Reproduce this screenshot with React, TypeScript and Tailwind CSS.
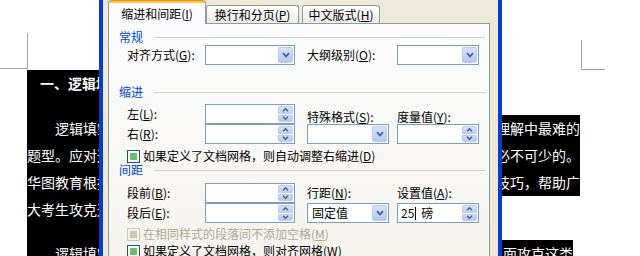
import type { ReactNode } from "react";

// access key letter, underlined like the XP dialogs do
function Key({ k }: { k: string }) {
  return (
    <>
      (<span className="underline">{k}</span>)
    </>
  );
}

function DropButton() {
  return (
    <span className="flex h-full w-[15px] items-center justify-center rounded-[2px] border border-[#B9CBF3] bg-linear-to-b from-[#D6E2FD] to-[#B3C7F3]">
      <svg width="8" height="6" viewBox="0 0 8 6">
        <path d="M1 1.2 L4 4.4 L7 1.2" stroke="#4D6185" strokeWidth="1.8" fill="none" />
      </svg>
    </span>
  );
}

function SpinButtons() {
  return (
    <span className="flex h-full w-[15px] flex-col gap-px">
      <span className="flex flex-1 items-center justify-center rounded-t-[2px] border border-[#B9CBF3] bg-linear-to-b from-[#D6E2FD] to-[#BFD0F6]">
        <svg width="7" height="4" viewBox="0 0 7 4">
          <path d="M1 3.2 L3.5 0.8 L6 3.2" stroke="#4D6185" strokeWidth="1.5" fill="none" />
        </svg>
      </span>
      <span className="flex flex-1 items-center justify-center rounded-b-[2px] border border-[#B9CBF3] bg-linear-to-b from-[#C9D8FB] to-[#B3C7F3]">
        <svg width="7" height="4" viewBox="0 0 7 4">
          <path d="M1 0.8 L3.5 3.2 L6 0.8" stroke="#4D6185" strokeWidth="1.5" fill="none" />
        </svg>
      </span>
    </span>
  );
}

function Combo({ width, value }: { width: string; value?: ReactNode }) {
  return (
    <div className={`flex h-[20px] ${width} border border-[#7F9DB9] bg-white p-px`}>
      <span className="flex-1 pl-[3px] text-[12px] leading-[16px] text-black">{value}</span>
      <DropButton />
    </div>
  );
}

function Spinner({ width, value }: { width: string; value?: ReactNode }) {
  return (
    <div className={`flex h-[20px] ${width} border border-[#7F9DB9] bg-white p-px`}>
      <span className="flex flex-1 items-center pl-[2px] text-[12px] leading-[16px] text-black">{value}</span>
      <SpinButtons />
    </div>
  );
}

function Check({ disabled }: { disabled?: boolean }) {
  return (
    <span
      className={
        disabled
          ? "flex h-[13px] w-[13px] items-center justify-center border border-[#CAC8BB] bg-[#F4F3EE]"
          : "flex h-[13px] w-[13px] items-center justify-center border border-[#1C5180] bg-white"
      }
    >
      <span className={disabled ? "h-[7px] w-[7px] bg-[#CAC8BB]" : "h-[7px] w-[7px] bg-[#6CBF66]"} />
    </span>
  );
}

function Section({ title }: { title: string }) {
  return (
    <div className="flex h-[14px] items-center">
      <span className="text-[12px] leading-[14px] text-[#0046D5]">{title}</span>
      <span className="mr-[4px] ml-[12px] h-px flex-1 bg-[#D5D2C4]" />
    </div>
  );
}

function Label({ children, className = "" }: { children: ReactNode; className?: string }) {
  return <span className={`text-[12px] leading-[14px] text-black ${className}`}>{children}</span>;
}

function CheckRow({ disabled, children }: { disabled?: boolean; children: ReactNode }) {
  return (
    <div className="flex h-[14px] items-center pl-[8px]">
      <Check disabled={disabled} />
      <span
        className={
          disabled
            ? "ml-[3px] text-[12px] leading-[14px] text-[#ACA899]"
            : "ml-[3px] text-[12px] leading-[14px] text-black"
        }
      >
        {children}
      </span>
    </div>
  );
}

function Tabs() {
  return (
    <div className="relative z-10 flex h-[23px] items-end text-[12px] text-black">
      <div className="-mb-px flex h-[24px] w-[98px] flex-col rounded-t-[3px] border-x border-[#919B9C] bg-[#FCFCFE]">
        <div className="h-[3px] rounded-t-[3px] border-t border-[#E68B2C] bg-[#FFC83C]" />
        <div className="flex flex-1 items-center justify-center leading-[14px]">
          缩进和间距<Key k="I" />
        </div>
      </div>
      <div className="flex h-[18px] w-[93px] items-center justify-center rounded-t-[3px] border-x border-t border-[#919B9C] bg-linear-to-b from-white to-[#ECEBE6] leading-[14px]">
        换行和分页<Key k="P" />
      </div>
      <div className="ml-[3px] flex h-[18px] w-[78px] items-center justify-center rounded-t-[3px] border-x border-t border-[#919B9C] bg-linear-to-b from-white to-[#ECEBE6] leading-[14px]">
        中文版式<Key k="H" />
      </div>
    </div>
  );
}

function Panel() {
  return (
    <div className="flex flex-1 flex-col border border-[#919B9C] bg-linear-to-b from-[#FCFCFE] to-[#F4F3EE] pt-[6px] pl-[10px]">
      <Section title="常规" />
      <div className="mt-px flex h-[20px] items-center pl-[8px]">
        <Label className="w-[78px]">
          对齐方式<Key k="G" />:
        </Label>
        <Combo width="w-[90px]" />
        <Label className="ml-[12px] w-[90px]">
          大纲级别<Key k="O" />:
        </Label>
        <Combo width="w-[82px]" />
      </div>

      <div className="mt-[20px]">
        <Section title="缩进" />
      </div>
      <div className="mt-[5px] flex pl-[8px]">
        <div className="flex flex-col">
          <div className="flex h-[20px] items-center">
            <Label className="w-[78px]">
              左<Key k="L" />:
            </Label>
            <Spinner width="w-[90px]" />
          </div>
          <div className="flex h-[20px] items-center">
            <Label className="w-[78px]">
              右<Key k="R" />:
            </Label>
            <Spinner width="w-[90px]" />
          </div>
        </div>
        <div className="ml-[12px] flex w-[82px] flex-col">
          <div className="flex h-[20px] items-end">
            <Label>
              特殊格式<Key k="S" />:
            </Label>
          </div>
          <Combo width="w-[82px]" />
        </div>
        <div className="ml-[8px] flex w-[82px] flex-col">
          <div className="flex h-[20px] items-end">
            <Label>
              度量值<Key k="Y" />:
            </Label>
          </div>
          <Spinner width="w-[82px]" />
        </div>
      </div>
      <div className="mt-[5px]">
        <CheckRow>
          如果定义了文档网格，则自动调整右缩进<Key k="D" />
        </CheckRow>
      </div>

      <Section title="间距" />
      <div className="mt-[6px] flex pl-[8px]">
        <div className="flex flex-col">
          <div className="flex h-[20px] items-center">
            <Label className="w-[78px]">
              段前<Key k="B" />:
            </Label>
            <Spinner width="w-[90px]" />
          </div>
          <div className="flex h-[20px] items-center">
            <Label className="w-[78px]">
              段后<Key k="E" />:
            </Label>
            <Spinner width="w-[90px]" />
          </div>
        </div>
        <div className="ml-[12px] flex w-[82px] flex-col">
          <div className="flex h-[20px] items-center">
            <Label>
              行距<Key k="N" />:
            </Label>
          </div>
          <Combo width="w-[82px]" value="固定值" />
        </div>
        <div className="ml-[8px] flex w-[82px] flex-col">
          <div className="flex h-[20px] items-center">
            <Label>
              设置值<Key k="A" />:
            </Label>
          </div>
          <Spinner
            width="w-[82px]"
            value={
              <>
                25<span className="mx-px inline-block h-[13px] w-px bg-black" />
                <span className="ml-[4px]">磅</span>
              </>
            }
          />
        </div>
      </div>
      <div className="mt-[4px]">
        <CheckRow disabled>
          在相同样式的段落间不添加空格<Key k="M" />
        </CheckRow>
      </div>
      <div className="mt-[3px]">
        <CheckRow>
          如果定义了文档网格，则对齐网格<Key k="W" />
        </CheckRow>
      </div>
    </div>
  );
}

function ParagraphDialog() {
  return (
    <div className="absolute top-0 left-[99px] flex h-[256px] w-[403px] border-x-4 border-[#0A3CCB] bg-[#ECE9D8]">
      <div className="ml-[5px] flex w-[382px] flex-col">
        <Tabs />
        <Panel />
      </div>
    </div>
  );
}

// a highlighted document line; the dialog covers its middle
function Line({ left, right, width, indent }: { left: string; right?: string; width: string; indent?: boolean }) {
  return (
    <div className={`flex h-[27px] ${width} justify-between bg-black`}>
      <span className={indent ? "whitespace-nowrap pl-[28px]" : "whitespace-nowrap"}>{left}</span>
      {right && <span className="whitespace-nowrap">{right}</span>}
    </div>
  );
}

function Page() {
  return (
    <div className="flex flex-col">
      {/* page corner marks */}
      <div className="flex h-[70px]">
        <div className="mt-[33px] h-[36px] w-[28px] border-r border-b border-[#A3A3A3]" />
        <div className="w-[553px]" />
        <div className="mt-[40px] h-[30px] w-[24px] border-b border-l border-[#A3A3A3]" />
      </div>
      <div className="ml-[27px] flex flex-col text-[14px] leading-[27px] text-white">
        <div className="h-[45px] w-[475px] bg-black pl-[13px] font-bold whitespace-nowrap">一、逻辑填</div>
        <Line width="w-[553px]" indent left="逻辑填空" right="理解中最难的" />
        <Line width="w-[553px]" left="题型。应对这" right="必不可少的。" />
        <Line width="w-[553px]" left="华图教育根据" right="技巧，帮助广" />
        <div className="h-[44px] w-[475px] bg-black whitespace-nowrap">大考生攻克这</div>
        <Line width="w-[546px]" indent left="逻辑填空" right="面攻克这类" />
      </div>
    </div>
  );
}

export default function App() {
  return (
    <div className="relative h-[256px] w-[640px] overflow-hidden bg-white font-['Noto_Sans_CJK_SC',sans-serif]">
      <Page />
      <ParagraphDialog />
    </div>
  );
}
